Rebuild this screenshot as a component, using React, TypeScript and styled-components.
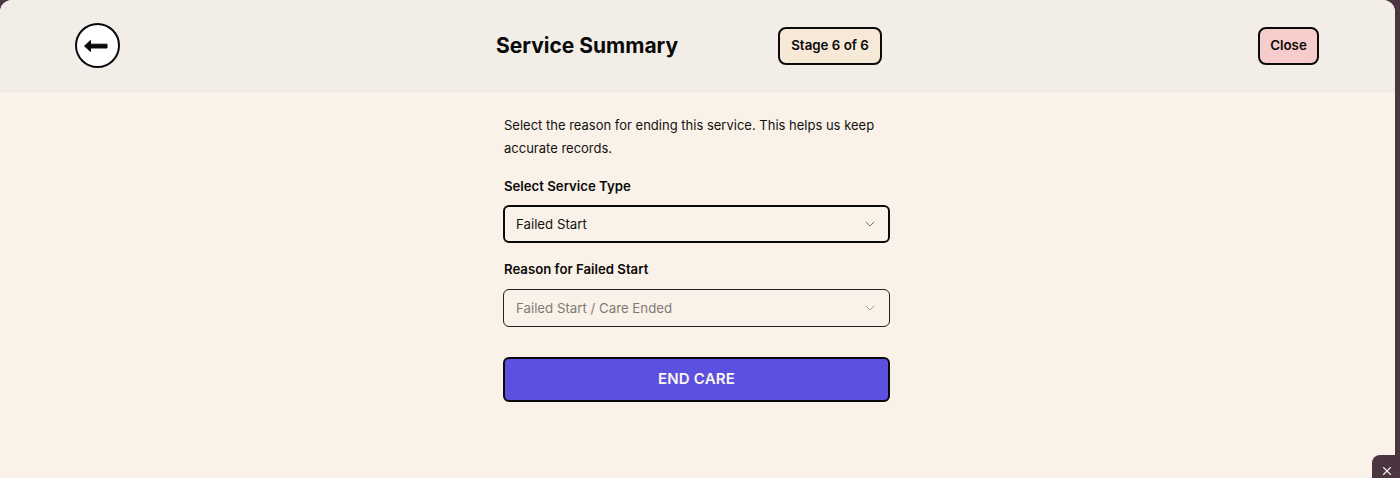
import React from 'react';
import styled, { createGlobalStyle } from 'styled-components';
import { ChevronDown, X } from 'lucide-react';

const GlobalStyle = createGlobalStyle`
  html, body {
    margin: 0;
    padding: 0;
    height: 100%;
    overflow: hidden;
    background: #4a3540;
    font-family: Inter, "Liberation Sans", sans-serif;
  }
  #root { height: 100%; }
`;

const Page = styled.div`
  position: relative;
  height: 478px;
  padding-right: 5px;
  box-sizing: border-box;
`;

const Modal = styled.div`
  height: 100%;
  display: flex;
  flex-direction: column;
  background: #faf2e8;
  border-radius: 12px 12px 0 0;
  overflow: hidden;
`;

const Header = styled.header`
  height: 92px;
  flex: none;
  box-sizing: border-box;
  display: flex;
  align-items: center;
  justify-content: space-between;
  padding: 1px 76px 0 75px;
  background: #f2ede6;
  border-bottom: 1px solid #ece7df;
`;

const BackButton = styled.button`
  width: 45px;
  height: 45px;
  margin-top: -1px;
  padding: 0 4px 0 0;
  display: flex;
  align-items: center;
  justify-content: center;
  background: #fff;
  border: 2px solid #0a0a0a;
  border-radius: 50%;
`;

const HeaderGroup = styled.div`
  display: flex;
  align-items: center;
  gap: 101px;
`;

const Title = styled.h1`
  width: 181px;
  margin: 0 0 2px;
  font-size: 21px;
  font-weight: 700;
  white-space: nowrap;
  color: #0a0a0a;
`;

const Chip = styled.div<{ $bg: string; $width: number }>`
  width: ${p => p.$width}px;
  height: 38px;
  box-sizing: border-box;
  display: flex;
  align-items: center;
  justify-content: center;
  padding-bottom: 2px;
  background: ${p => p.$bg};
  border: 2px solid #0a0a0a;
  border-radius: 8px;
  font-size: 13.3px;
  font-weight: 600;
  color: #0a0a0a;
  white-space: nowrap;
`;

const Body = styled.main`
  width: 387px;
  margin-left: 503px;
  padding-top: 22px;
  display: flex;
  flex-direction: column;
`;

const Intro = styled.p`
  margin: 0 0 16px 1px;
  font-size: 13px;
  line-height: 23px;
  color: #111;
`;

const Label = styled.label`
  display: block;
  height: 20px;
  margin: 0 0 10px 1px;
  font-size: 13.2px;
  line-height: 20px;
  font-weight: 600;
  color: #0a0a0a;
`;

const Select = styled.div<{ $active?: boolean }>`
  height: 38px;
  box-sizing: border-box;
  display: flex;
  align-items: center;
  justify-content: space-between;
  margin: ${p => (p.$active ? '-1px 0 16px' : '0 0 30px')};
  padding: ${p => (p.$active ? '0 10px 0 11px' : '0 11px 1px 12px')};
  border-radius: 6px;
  border: ${p => (p.$active ? '2px solid #0a0a0a' : '1px solid #222')};
  font-size: 13.25px;
  color: ${p => (p.$active ? '#111' : '#7d7a76')};
  svg { color: ${p => (p.$active ? '#77736e' : '#a5a29c')}; }
`;

const SubmitButton = styled.button`
  height: 45px;
  padding: 0 0 2px;
  background: #5b50e0;
  border: 2px solid #0a0a0a;
  border-radius: 6px;
  color: #fbf6ee;
  font-family: inherit;
  font-size: 15px;
  font-weight: 600;
  letter-spacing: 0.2px;
`;

const SupportTab = styled.div`
  position: absolute;
  right: 0;
  bottom: 0;
  width: 28px;
  height: 23px;
  display: flex;
  align-items: flex-start;
  justify-content: center;
  padding: 9px 0 0 2px;
  box-sizing: border-box;
  overflow: hidden;
  background: #4a3540;
  border-top-left-radius: 8px;
  color: #f5eee6;
`;

export default function App() {
  return (
    <>
      <GlobalStyle />
      <Page>
        <Modal>
          <Header>
            <BackButton aria-label="Back">
              <svg width="25" height="14" viewBox="0 0 25 14" fill="#0a0a0a" stroke="#0a0a0a" strokeWidth="1" strokeLinejoin="round">
                <path d="M7.5 1.5 L1.5 7 L7.5 12.5 V9 H24 V5.2 H7.5 Z" />
              </svg>
            </BackButton>
            <HeaderGroup>
              <Title>Service Summary</Title>
              <Chip $bg="#f7e9d7" $width={104}>Stage 6 of 6</Chip>
            </HeaderGroup>
            <Chip $bg="#f6cdcb" $width={61}>Close</Chip>
          </Header>
          <Body>
            <Intro>
              Select the reason for ending this service. This helps us keep accurate records.
            </Intro>
            <Label>Select Service Type</Label>
            <Select $active>
              Failed Start
              <ChevronDown size={16} strokeWidth={1.5} />
            </Select>
            <Label>Reason for Failed Start</Label>
            <Select>
              Failed Start / Care Ended
              <ChevronDown size={16} strokeWidth={1.5} />
            </Select>
            <SubmitButton>END CARE</SubmitButton>
          </Body>
        </Modal>
        <SupportTab>
          <X size={14} strokeWidth={2} />
        </SupportTab>
      </Page>
    </>
  );
}
